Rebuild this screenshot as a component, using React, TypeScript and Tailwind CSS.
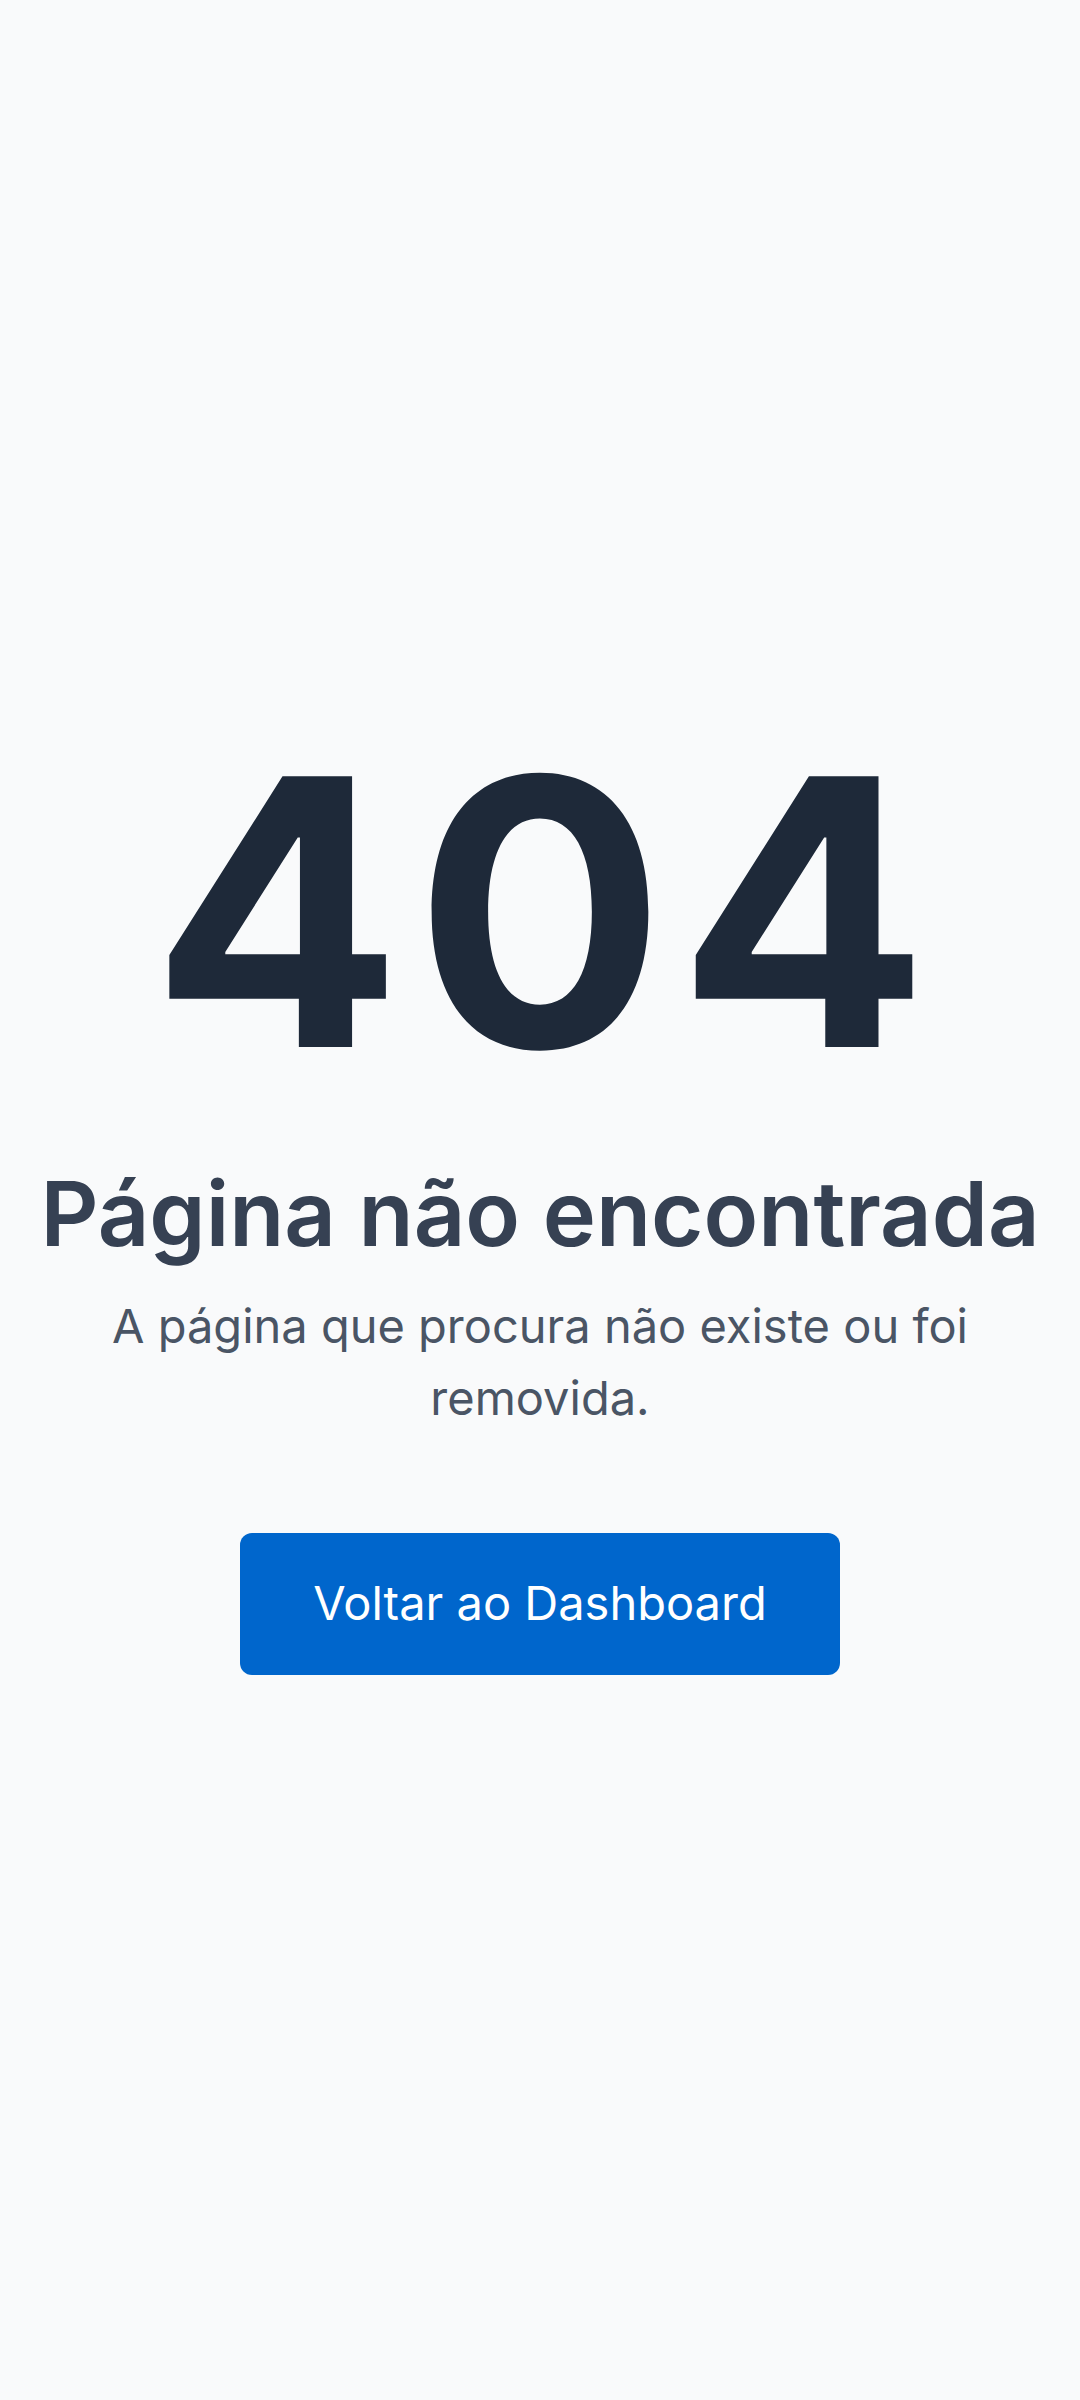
export default function App() {
  return (
    <div className="min-h-screen bg-gray-50 flex items-center justify-center px-5 font-['Inter',sans-serif]">
      <div className="flex flex-col items-center text-center">
        <h1 className="pl-[12px] text-[372px] leading-none font-bold text-gray-800 tracking-[12px]">404</h1>
        <h2 className="mt-[62px] text-[90px] leading-[1.2] font-semibold text-gray-700">Página não encontrada</h2>
        <p className="mt-[22px] text-[47px] leading-[72px] text-gray-600 max-w-[900px]">
          A página que procura não existe ou foi removida.
        </p>
        <button className="mt-[99px] w-[600px] h-[142px] rounded-xl bg-[#0066cc] text-white text-[47px]">
          Voltar ao Dashboard
        </button>
      </div>
    </div>
  );
}
